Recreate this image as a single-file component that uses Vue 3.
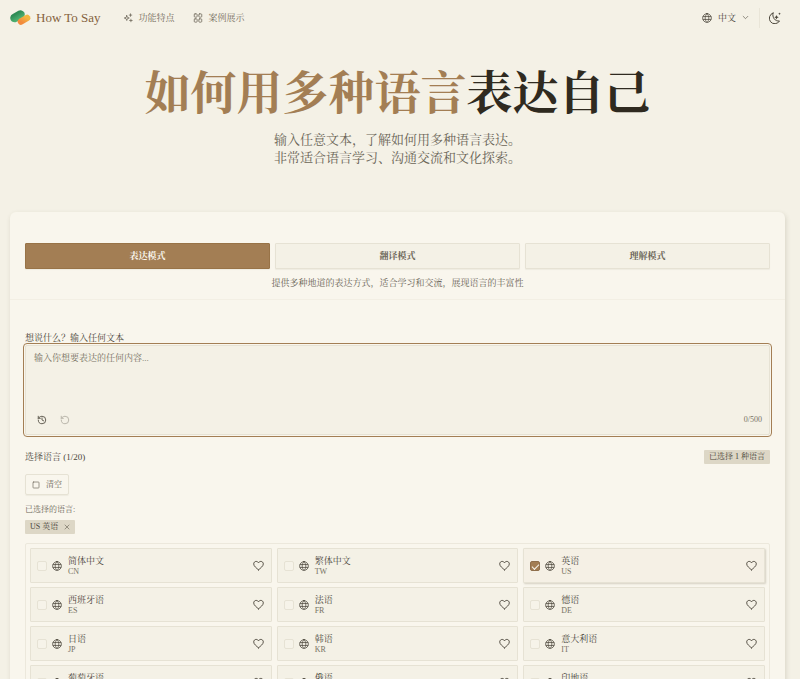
<template>
  <div class="page">
    <header class="topbar">
      <a href="#" class="brand">
        <svg class="logo" viewBox="0 0 42 30" aria-hidden="true">
          <defs>
            <linearGradient id="leaf" x1="0" y1="0" x2="1" y2="1">
              <stop offset="0" stop-color="#2f8b55" />
              <stop offset="1" stop-color="#4cb070" />
            </linearGradient>
            <linearGradient id="sun" x1="0" y1="1" x2="1" y2="0">
              <stop offset="0" stop-color="#f28b3c" />
              <stop offset="1" stop-color="#f3b63f" />
            </linearGradient>
          </defs>
          <path d="M9 16 21 9" stroke="url(#leaf)" stroke-width="17" stroke-linecap="round" />
          <path d="M22 23 34 16" stroke="url(#sun)" stroke-width="13" stroke-linecap="round" />
        </svg>
        <span>How To Say</span>
      </a>
      <nav class="nav">
        <a href="#features">
          <svg class="icon" viewBox="0 0 24 24">
            <path d="M9 6l1.6 4.4L15 12l-4.4 1.6L9 18l-1.6-4.4L3 12l4.400-1.600z" />
            <path d="M18 2v6M15 5h6M19 15v6M16 18h6" />
          </svg>
          功能特点
        </a>
        <a href="#showcase">
          <svg class="icon" viewBox="0 0 24 24">
            <rect x="3" y="2" width="7" height="8" rx="2" />
            <rect x="14" y="2" width="7" height="8" rx="2" />
            <rect x="3" y="14" width="7" height="8" rx="2" />
            <rect x="14" y="14" width="7" height="8" rx="2" />
          </svg>
          案例展示
        </a>
      </nav>
      <div class="tools">
        <button type="button" class="locale">
          <svg class="globe" viewBox="0 0 24 24"><path :d="globe" /></svg>
          <span>中文</span>
          <svg class="chevron" viewBox="0 0 24 24"><path d="M4 8l8 8 8-8" /></svg>
        </button>
        <button type="button" class="theme" aria-label="切换主题">
          <svg viewBox="0 0 24 24">
            <path d="M8 2A11 11 0 1 0 21 18C12 19 6 11 8 2z" />
            <path class="star" d="M15 6l1.300 3.200L19.500 10.500l-3.200 1.300L15 15l-1.300-3.200-3.200-1.300 3.200-1.300z" />
            <path class="star" d="M21 1l.8 1.700 1.700.8-1.700.8L21 6l-.8-1.700-1.700-.8 1.700-.8z" />
          </svg>
        </button>
      </div>
    </header>

    <section class="hero">
      <h1><span>如何用多种语言</span>表达自己</h1>
      <p>输入任意文本，了解如何用多种语言表达。<br />非常适合语言学习、沟通交流和文化探索。</p>
    </section>

    <main class="card">
      <div class="modes">
        <div class="mode-list">
          <button
            v-for="mode in modes"
            :key="mode"
            type="button"
            :class="{ active: mode === currentMode }"
            @click="currentMode = mode"
          >{{ mode }}</button>
        </div>
        <p>提供多种地道的表达方式，适合学习和交流，展现语言的丰富性</p>
      </div>

      <div class="form">
        <label for="text" class="label">想说什么？输入任何文本</label>
        <div class="editor">
          <textarea id="text" v-model="text" maxlength="500" placeholder="输入你想要表达的任何内容..."></textarea>
          <div class="editor-bar">
            <button type="button" aria-label="历史记录">
              <svg viewBox="0 0 24 24">
                <path d="M3 12a9 9 0 1 0 9-9 9.750 9.750 0 0 0-6.740 2.740L3 8" />
                <path d="M3 3v5h5M12 7v5l4 2" />
              </svg>
            </button>
            <button type="button" aria-label="重置" :disabled="!text">
              <svg viewBox="0 0 24 24">
                <path d="M3 12a9 9 0 1 0 9-9 9.750 9.750 0 0 0-6.740 2.740L3 8" />
                <path d="M3 3v5h5" />
              </svg>
            </button>
            <span class="count">{{ text.length }}/500</span>
          </div>
        </div>

        <div class="select-head">
          <h2>选择语言 ({{ selected.length }}/20)</h2>
          <span class="tag">已选择 {{ selected.length }} 种语言</span>
        </div>
        <button type="button" class="clear" @click="selected = []">
          <svg viewBox="0 0 24 24"><rect x="3" y="3" width="18" height="18" rx="2" /></svg>
          清空
        </button>
        <p class="hint">已选择的语言:</p>
        <div class="chips">
          <span v-for="lang in chosen" :key="lang.code" class="tag chip">
            {{ lang.code }} {{ lang.name }}
            <button type="button" :aria-label="'移除' + lang.name" @click="remove(lang.code)">
              <svg viewBox="0 0 24 24"><path d="M4 4l16 16M20 4L4 20" /></svg>
            </button>
          </span>
        </div>

        <div class="languages">
          <div
            v-for="lang in languages"
            :key="lang.code"
            class="language"
            :class="{ checked: selected.includes(lang.code) }"
          >
            <input :id="'lang-' + lang.code" v-model="selected" type="checkbox" :value="lang.code" />
            <label :for="'lang-' + lang.code">
              <svg class="globe" viewBox="0 0 24 24"><path :d="globe" /></svg>
              <span class="names">
                <span class="name">{{ lang.name }}</span>
                <span class="code">{{ lang.code }}</span>
              </span>
            </label>
            <button type="button" :aria-label="'收藏' + lang.name">
              <svg viewBox="0 0 24 24">
                <path d="M12 21.500C8 18 1.500 13.500 1.500 8.500 1.500 5.500 4 3 7 3c2.200 0 4 1.200 5 3.200 1-2 2.800-3.200 5-3.200 3 0 5.500 2.500 5.500 5.500 0 5-6.500 9.500-10.500 13z" />
              </svg>
            </button>
          </div>
        </div>
      </div>
    </main>
  </div>
</template>

<script setup>
import { ref, computed } from 'vue'

const globe = 'M12 1.500a10.500 10.500 0 1 0 0 21a10.500 10.500 0 1 0 0-21zM12 1.500c-6 5-6 16 0 21c6-5 6-16 0-21zM3 8.500h18M3 15.500h18'

const modes = ['表达模式', '翻译模式', '理解模式']
const currentMode = ref('表达模式')
const text = ref('')
const selected = ref(['US'])

const languages = [
  { name: '简体中文', code: 'CN' },
  { name: '繁体中文', code: 'TW' },
  { name: '英语', code: 'US' },
  { name: '西班牙语', code: 'ES' },
  { name: '法语', code: 'FR' },
  { name: '德语', code: 'DE' },
  { name: '日语', code: 'JP' },
  { name: '韩语', code: 'KR' },
  { name: '意大利语', code: 'IT' },
  { name: '葡萄牙语', code: 'PT' },
  { name: '俄语', code: 'RU' },
  { name: '印地语', code: 'IN' }
]

const chosen = computed(() => languages.filter(l => selected.value.includes(l.code)))

const remove = (code) => {
  selected.value = selected.value.filter(c => c !== code)
}
</script>

<style>
body {
  margin: 0;
  background: #f4f1e6;
}
</style>

<style scoped>
.page {
  padding: 0 15px 16px 10px;
  font-family: "Liberation Serif", "Noto Serif CJK SC", "Noto Sans CJK SC", serif;
  font-size: 9px;
  line-height: 12px;
  color: #4b463b;
}
.page * {
  box-sizing: border-box;
}
h1, h2, p {
  margin: 0;
  font-weight: 400;
}
button {
  font: inherit;
  color: inherit;
  background: none;
  border: none;
  padding: 0;
  cursor: pointer;
}
a {
  color: inherit;
  text-decoration: none;
}
svg {
  display: block;
  flex: none;
  fill: none;
  stroke: currentColor;
  stroke-width: 2;
  stroke-linecap: round;
  stroke-linejoin: round;
}
.icon {
  width: 10px;
  height: 10px;
}
.topbar {
  display: flex;
  align-items: center;
  height: 35px;
}
.brand {
  display: flex;
  align-items: center;
  gap: 5px;
  font-size: 13px;
  line-height: 16px;
  color: #85623d;
}
.logo {
  width: 21px;
  height: 15px;
}
.nav {
  display: flex;
  gap: 18px;
  margin-left: 22px;
  color: #746e60;
}
.nav a {
  display: flex;
  align-items: center;
  gap: 6px;
}
.tools {
  display: flex;
  align-items: center;
  margin-left: auto;
}
.locale {
  display: flex;
  align-items: center;
  gap: 6px;
  height: 20px;
  padding-right: 10px;
  border-right: 1px solid #e9e5d8;
}
.chevron {
  width: 7px;
  height: 7px;
}
.theme {
  padding: 0 4px 0 9px;
}
.theme svg {
  width: 12px;
  height: 12px;
}
.theme .star {
  fill: currentColor;
  stroke: none;
}
.hero {
  padding: 29px 0 45px;
  text-align: center;
}
.hero h1 {
  font-size: 46px;
  line-height: 60px;
  font-weight: 700;
  color: #2f2a20;
}
.hero h1 span {
  color: #a37e54;
}
.hero p {
  margin-top: 7px;
  font-size: 13px;
  line-height: 18px;
  color: #6b6557;
}
.card {
  background: #f9f6ed;
  border-radius: 6px;
  box-shadow: 1px 2px 5px rgba(70, 60, 30, 0.16);
}
.modes {
  padding: 31px 15px 10px;
  border-bottom: 1px solid #f3efe4;
  text-align: center;
  color: #6b6557;
}
.mode-list {
  display: grid;
  grid-template-columns: repeat(3, 1fr);
  gap: 5px;
}
.mode-list button {
  height: 26px;
  background: #f4f1e6;
  border: 1px solid #e6e2d4;
  border-radius: 1px;
  box-shadow: 0 1px 1px rgba(70, 60, 30, 0.06);
  font-weight: 700;
}
.mode-list .active {
  background: #a37e54;
  border-color: #987347;
  color: #f9f6ed;
}
.modes p {
  margin-top: 8px;
}
.form {
  padding: 32px 15px 16px;
}
.label {
  display: block;
}
.editor {
  margin-top: 1px;
  height: 90px;
  display: flex;
  flex-direction: column;
  background: #f4f1e6;
  border: 1px solid #e6e2d4;
  border-radius: 2px;
  outline: 1px solid #a37e54;
  outline-offset: 1px;
}
.editor textarea {
  flex: 1;
  min-height: 0;
  padding: 6px 8px;
  border: none;
  outline: none;
  resize: none;
  background: none;
  font: inherit;
  color: inherit;
}
.editor textarea::placeholder {
  color: #777164;
}
.editor-bar {
  display: flex;
  align-items: center;
  gap: 13px;
  padding: 0 7px 8px 11px;
}
.editor-bar svg {
  width: 10px;
  height: 10px;
}
.editor-bar button:disabled {
  opacity: 0.4;
}
.count {
  margin-left: auto;
  font-size: 8px;
  color: #777164;
}
.select-head {
  display: flex;
  align-items: center;
  justify-content: space-between;
  margin-top: 15px;
}
.select-head h2 {
  font-size: 9px;
}
.tag {
  padding: 1px 5px;
  font-size: 8px;
  background: #ddd7c6;
  border-radius: 1px;
}
.clear {
  display: flex;
  align-items: center;
  gap: 6px;
  height: 21px;
  margin-top: 10px;
  padding: 0 6px;
  font-size: 8px;
  color: #6b6557;
  border: 1px solid #e6e2d4;
  border-radius: 2px;
  box-shadow: 0 1px 1px rgba(70, 60, 30, 0.06);
}
.clear svg {
  width: 8px;
  height: 8px;
}
.hint {
  margin-top: 9px;
  font-size: 8px;
  color: #6b6557;
}
.chips {
  display: flex;
  gap: 4px;
  min-height: 14px;
  margin-top: 4px;
}
.chip {
  display: flex;
  align-items: center;
  gap: 6px;
}
.chip svg {
  width: 6px;
  height: 6px;
}
.languages {
  display: grid;
  grid-template-columns: repeat(3, 1fr);
  gap: 4px 5px;
  margin-top: 9px;
  padding: 4px;
  border: 1px solid #ece8dc;
  border-radius: 2px;
}
.language {
  display: flex;
  align-items: center;
  height: 35px;
  padding: 0 7px 0 6px;
  background: #f4f1e6;
  border: 1px solid #e6e2d4;
  border-radius: 1px;
}
.language.checked {
  background: #f5f0e5;
  box-shadow: 1px 1px 2px rgba(70, 60, 30, 0.2);
}
.language input {
  appearance: none;
  display: grid;
  place-items: center;
  width: 10px;
  height: 10px;
  margin: 0;
  border: 1px solid #e6e2d4;
  border-radius: 2px;
  background: #f6f3e9;
}
.language input:checked {
  background: #a37e54;
  border-color: #8f6f4c;
}
.language input:checked::after {
  content: "";
  width: 6px;
  height: 3px;
  border: solid #f9f6ed;
  border-width: 0 0 1px 1px;
  transform: rotate(-45deg);
}
.language label {
  flex: 1;
  display: flex;
  align-items: center;
  gap: 6px;
  padding-left: 5px;
}
.globe {
  width: 10px;
  height: 10px;
  stroke-width: 1.8;
}
.names {
  display: flex;
  flex-direction: column;
}
.code {
  font-size: 8px;
  line-height: 9px;
  color: #777164;
}
.language button svg {
  width: 11px;
  height: 11px;
}
</style>
